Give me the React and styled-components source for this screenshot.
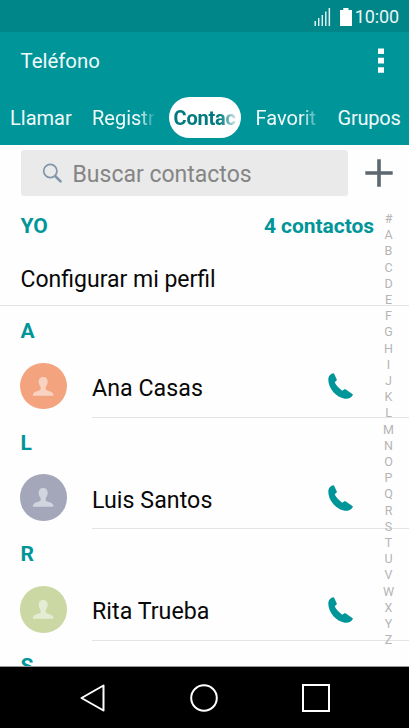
import React from "react";
import styled, { createGlobalStyle } from "styled-components";

const TEAL = "#009599";

const GlobalStyle = createGlobalStyle`
  * {
    box-sizing: border-box;
  }

  body {
    margin: 0;
    font-family: Roboto, "Liberation Sans", sans-serif;
    background: #fff;
  }
`;

const Screen = styled.div`
  display: flex;
  flex-direction: column;
  width: 409px;
  height: 728px;
  overflow: hidden;
  background: #fefefe;
`;

const StatusBar = styled.div`
  display: flex;
  flex: none;
  align-items: center;
  justify-content: flex-end;
  height: 32px;
  padding-right: 10px;
  color: #e9f5f5;
  background: #008589;
`;

const StatusIcons = styled.div`
  display: flex;
  align-items: flex-end;
  gap: 9px;
`;

const Clock = styled.span`
  margin-left: 3px;
  font-size: 18px;
  line-height: 32px;
  letter-spacing: -0.1px;
  padding-top: 2px;
`;

const Header = styled.header`
  flex: none;
  height: 113px;
  background: ${TEAL};
`;

const TitleBar = styled.div`
  display: flex;
  align-items: center;
  justify-content: space-between;
  height: 57px;
  padding: 1px 25px 0 20.5px;
`;

const AppTitle = styled.h1`
  margin: 0;
  font-size: 20.4px;
  font-weight: 400;
  color: #f0fafa;
`;

const Tabs = styled.nav`
  display: flex;
  align-items: center;
  height: 56px;
  padding-left: 4px;
`;

const Tab = styled.div`
  flex: none;
  width: ${(p) => (p.$active ? "72px" : "74px")};
  height: 41px;
  margin: ${(p) => (p.$active ? "0 9px 0 0.5px" : "0 4px")};
  padding: 0 ${(p) => (p.$active ? "5px" : "2px")};
  border-radius: 21px;
  font-size: 20px;
  font-weight: ${(p) => (p.$active ? 700 : 400)};
  line-height: 42px;
  white-space: nowrap;
  color: ${(p) => (p.$active ? "#007a7e" : "#f0fafa")};
  background: ${(p) => (p.$active ? "#fff" : "transparent")};
`;

const TabLabel = styled.span`
  display: block;
  width: ${(p) => p.$width}px;
  overflow: hidden;
  letter-spacing: ${(p) => p.$spacing || 0}px;
  mask-image: ${(p) => (p.$fade ? "linear-gradient(to right, #000 calc(100% - 16px), transparent calc(100% + 3px))" : "none")};
`;

const SearchRow = styled.div`
  display: flex;
  flex: none;
  align-items: center;
  justify-content: space-between;
  height: 56px;
  padding: 0 16.5px 0 20.5px;
`;

const SearchBox = styled.div`
  display: flex;
  align-items: center;
  width: 327.3px;
  height: 46px;
  padding-left: 21px;
  border-radius: 3px;
  background: #eaeaea;
`;

const Placeholder = styled.span`
  margin-left: 10px;
  padding-top: 2px;
  font-size: 23px;
  color: #858585;
`;

const Content = styled.main`
  position: relative;
  flex: none;
  height: 466px;
  border-bottom: 1px solid #999;
  overflow: hidden;
`;

const SectionHeader = styled.div`
  display: flex;
  justify-content: space-between;
  height: 50px;
  padding: 0 35px 0 20.5px;
  font-size: 21px;
  font-weight: 700;
  line-height: 51px;
  letter-spacing: -0.05px;
  color: ${TEAL};
`;

const ProfileRow = styled.div`
  height: 55px;
  padding-left: 20.5px;
  border-bottom: 1px solid #e4e4e4;
  font-size: 23px;
  line-height: 57px;
  color: #080808;
`;

const ContactRow = styled.div`
  display: flex;
  align-items: center;
  height: 61.7px;
  padding-left: 20.3px;
`;

const Avatar = styled.div`
  flex: none;
  width: 46.5px;
  height: 46.5px;
  margin-bottom: 1.6px;
  border-radius: 50%;
  background: ${(p) => p.$color};

  svg {
    display: block;
  }
`;

const ContactInfo = styled.div`
  display: flex;
  flex: 1;
  align-items: center;
  justify-content: space-between;
  height: 100%;
  margin-left: 25.2px;
  padding-right: 55px;
  border-bottom: 1px solid #e4e4e4;
`;

const Name = styled.span`
  padding-top: 3px;
  font-size: 23.2px;
  letter-spacing: 0.05px;
  color: #080808;
`;

const AlphaIndex = styled.div`
  position: absolute;
  top: 10px;
  right: 9.5px;
  width: 22px;
  font-size: 12.5px;
  line-height: 16.2px;
  text-align: center;
  color: #b5b5b5;
`;

const NavBar = styled.div`
  display: flex;
  flex: 1;
  align-items: center;
  justify-content: space-between;
  padding: 0 79px 0 80px;
  background: #000;
`;

const SignalIcon = () => (
  <svg width="17" height="19" viewBox="0 0 17 19" fill="currentColor">
    <path d="M.5 14h1.4v5H.5zM4 11h1.4v8H4zM7.6 8H9v11H7.600zM11.100 4.500h1.400V19h-1.400zM14.600 1h1.500v18h-1.500z" />
  </svg>
);

const BatteryIcon = () => (
  <svg width="12" height="18" viewBox="0 0 12 18" fill="#fff">
    <path d="M3.3 0h5.2v2H12v16H0V2h3.3z" />
  </svg>
);

const MoreIcon = () => (
  <svg width="6" height="26" viewBox="0 0 6 26" fill="#fff">
    <path d="M0 .5h6v5.5H0zM0 9.8h6v5.6H0zM0 19.2h6v5.6H0z" />
  </svg>
);

const SearchIcon = () => (
  <svg width="21" height="21" viewBox="0 0 21 21" fill="none" stroke="#8296aa">
    <circle cx="8.3" cy="8" r="6.6" strokeWidth="1.7" />
    <path d="M13.1 13l6.2 6.2" strokeWidth="2.5" />
  </svg>
);

const PlusIcon = () => (
  <svg width="28" height="28" viewBox="0 0 28 28" stroke="#5c6770" strokeWidth="3.6">
    <path d="M14 .3v27.4M.3 14h27.4" />
  </svg>
);

const PersonIcon = () => (
  <svg width="46.5" height="46.5" viewBox="0 0 139.5 139.5" fill="#fff" fillOpacity="0.52">
    <path d="M69.5 42c8.500 0 13.500 5.500 13.500 13.500 0 7-2.500 12.500-6 16.500v7.500c3 3 10.500 4.500 16 7 4.500 2.200 7.500 6 7.500 12H38.500c0-6 3-9.800 7.500-12 5.500-2.500 13-4 16-7V72c-3.500-4-6-9.500-6-16.500C56 47.500 61 42 69.500 42z" />
  </svg>
);

const CallIcon = () => (
  <svg width="26" height="28" viewBox="0 0 78 84" fill={TEAL}>
    <path d="M15 4c2-.5 3 .5 4 2.500l7 15.500c1 2 .5 3-1 4l-5 5c4 9 13 19 23 25l6-4c1.500-1 3-.5 4.500.5L73 66c2 1.500 2 2.500.5 4.500C68 78 60 82 50 80 25 76.500 2 51 1 25 1 13 5 8 15 4z" />
  </svg>
);

const BackIcon = () => (
  <svg width="25" height="28" viewBox="0 0 25 28" fill="none" stroke="#fff" strokeWidth="2">
    <path d="M23.500 1.500v25L1.500 14z" strokeLinejoin="round" />
  </svg>
);

const HomeIcon = () => (
  <svg width="28" height="28" viewBox="0 0 28 28" fill="none" stroke="#fff" strokeWidth="2">
    <circle cx="14" cy="14" r="12.8" />
  </svg>
);

const RecentsIcon = () => (
  <svg width="28" height="28" viewBox="0 0 28 28" fill="none" stroke="#fff" strokeWidth="2">
    <rect x="1" y="1" width="26" height="26" />
  </svg>
);

const TABS = [
  { label: "Llamar", width: 68 },
  { label: "Registr", width: 62, fade: true },
  { label: "Contac", width: 62, fade: true, active: true, spacing: -0.2 },
  { label: "Favorit", width: 62, fade: true },
  { label: "Grupos", width: 66, spacing: -0.2 },
];

const CONTACTS = [
  { name: "Ana Casas", color: "#f3a47e" },
  { name: "Luis Santos", color: "#a4a7ba" },
  { name: "Rita Trueba", color: "#cbd8a4" },
];

const LETTERS = "#ABCDEFGHIJKLMNOPQRSTUVWXYZ".split("");

const App = () => {
  return (
    <>
      <GlobalStyle />
      <Screen>
        <StatusBar>
          <StatusIcons>
            <SignalIcon />
            <BatteryIcon />
          </StatusIcons>
          <Clock>10:00</Clock>
        </StatusBar>

        <Header>
          <TitleBar>
            <AppTitle>Teléfono</AppTitle>
            <MoreIcon />
          </TitleBar>
          <Tabs>
            {TABS.map((tab) => (
              <Tab key={tab.label} $active={tab.active}>
                <TabLabel $width={tab.width} $fade={tab.fade} $spacing={tab.spacing}>
                  {tab.label}
                </TabLabel>
              </Tab>
            ))}
          </Tabs>
        </Header>

        <SearchRow>
          <SearchBox>
            <SearchIcon />
            <Placeholder>Buscar contactos</Placeholder>
          </SearchBox>
          <PlusIcon />
        </SearchRow>

        <Content>
          <SectionHeader>
            <span>YO</span>
            <span>4 contactos</span>
          </SectionHeader>
          <ProfileRow>Configurar mi perfil</ProfileRow>
          {CONTACTS.map(({ name, color }) => (
            <React.Fragment key={name}>
              <SectionHeader>{name[0]}</SectionHeader>
              <ContactRow>
                <Avatar $color={color}>
                  <PersonIcon />
                </Avatar>
                <ContactInfo>
                  <Name>{name}</Name>
                  <CallIcon />
                </ContactInfo>
              </ContactRow>
            </React.Fragment>
          ))}
          <SectionHeader>S</SectionHeader>
          <AlphaIndex>
            {LETTERS.map((letter) => (
              <div key={letter}>{letter}</div>
            ))}
          </AlphaIndex>
        </Content>

        <NavBar>
          <BackIcon />
          <HomeIcon />
          <RecentsIcon />
        </NavBar>
      </Screen>
    </>
  );
};

export default App;
